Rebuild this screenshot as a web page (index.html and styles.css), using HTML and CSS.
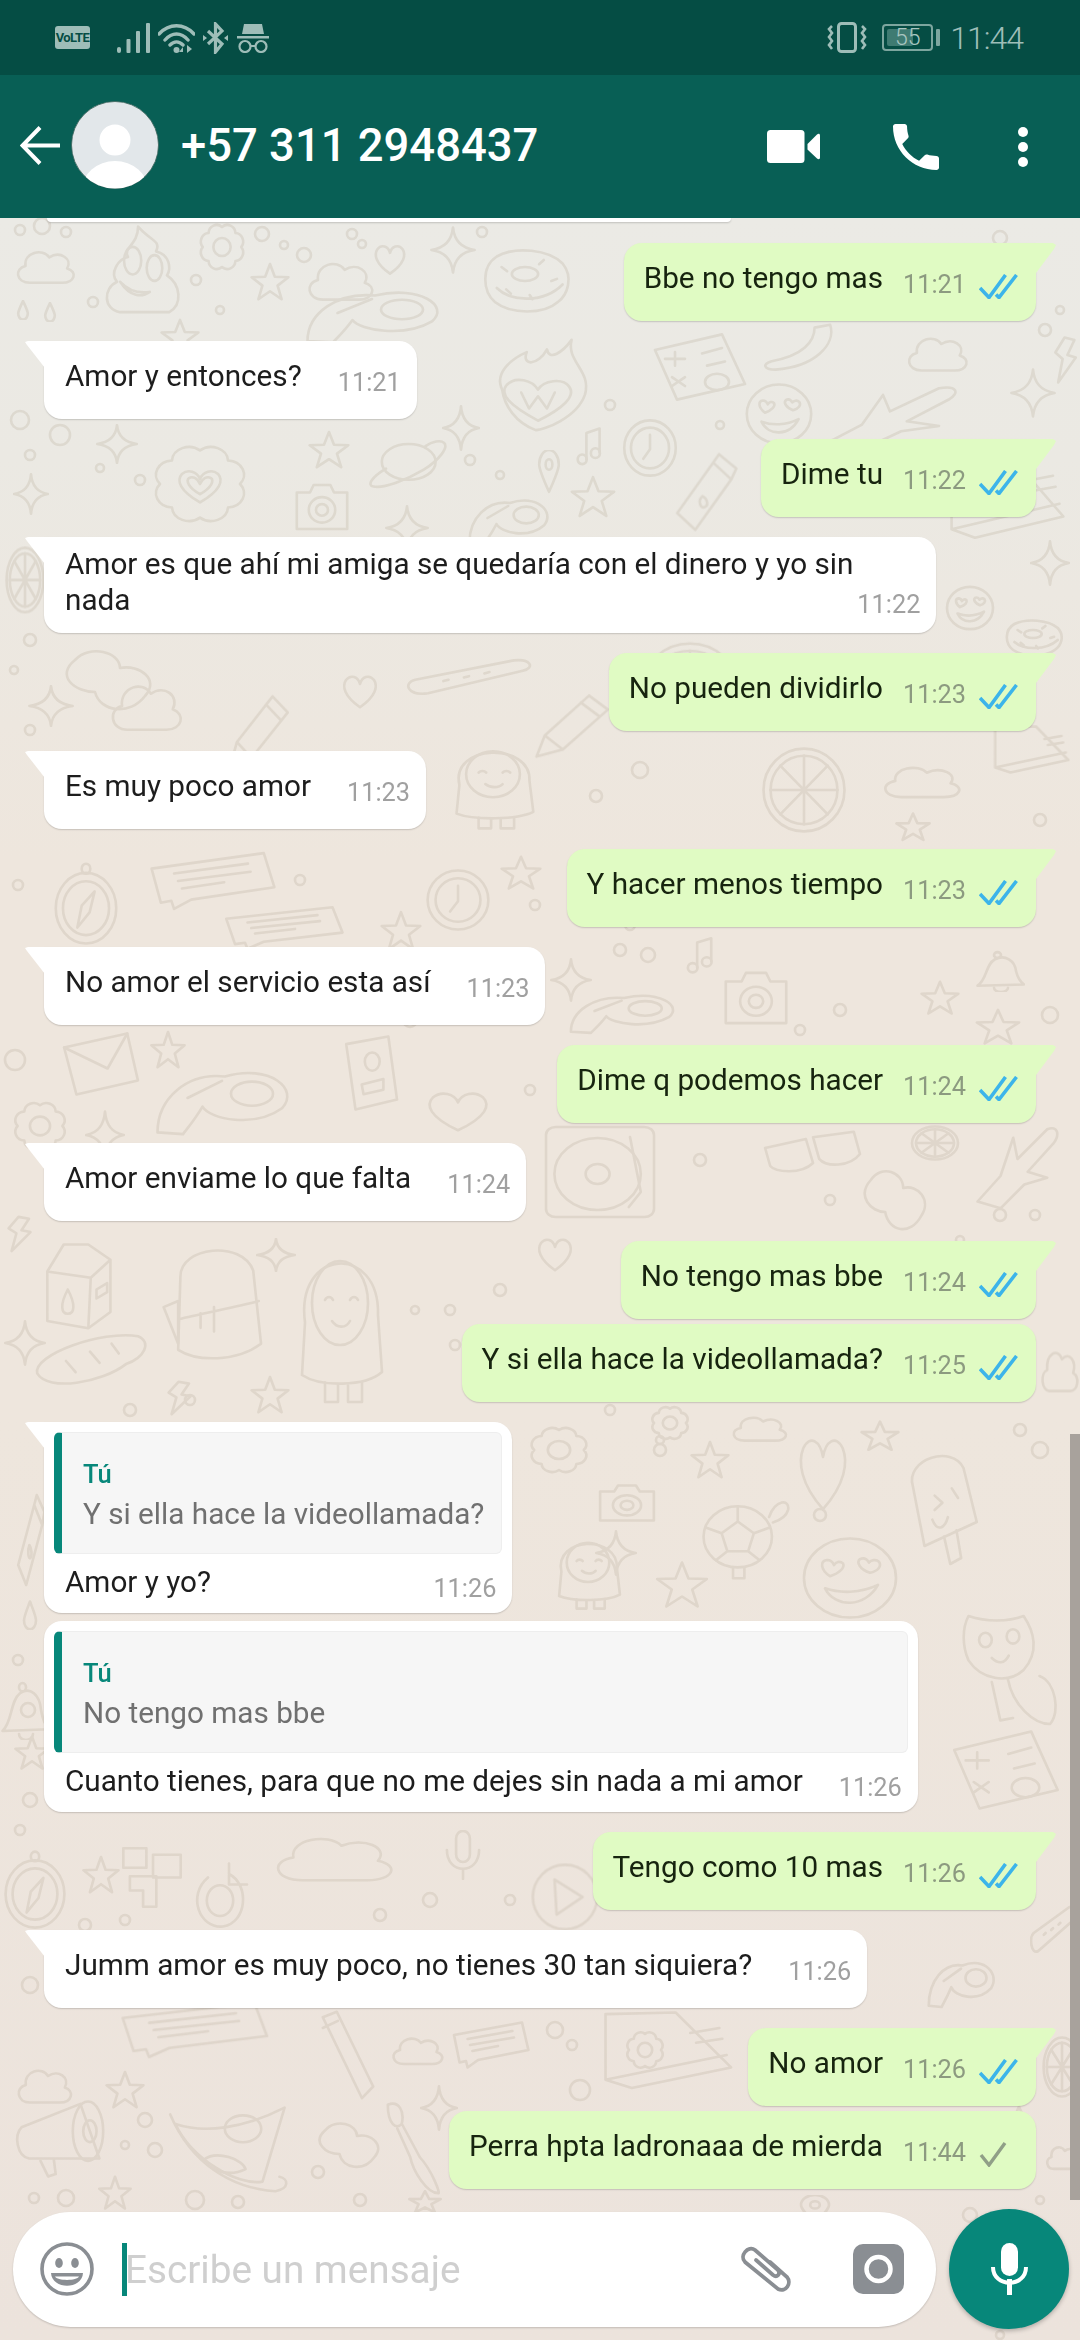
FILE: index.html
```html
<!DOCTYPE html>
<html lang="es">
<head>
<meta charset="utf-8">
<title>WhatsApp</title>
<link rel="stylesheet" href="styles.css">
</head>
<body>
<div class="phone">
  <div class="statusbar">
    <div class="status-left">
      <span class="volte">VoLTE</span>
      <svg class="ic-signal" viewBox="0 0 33 30"><rect x="0" y="24" width="4" height="6" rx="2"/><rect x="9.500" y="16" width="4" height="14" rx="1"/><rect x="19" y="8" width="4" height="22" rx="1"/><rect x="29" y="0" width="4" height="30" rx="1"/></svg>
      <svg class="ic-wifi" viewBox="0 0 37 30"><path d="M1 11C11 0 26 0 36 11M7 17C14 9 23 9 30 17M12 22C16 18 21 18 25 22" fill="none" stroke="#9ebdb8" stroke-width="3.400" stroke-linecap="round"/><circle cx="18.500" cy="27" r="3"/><path d="M25 24l-4 5h4zM29 22l5 4-5 4z"/></svg>
      <svg class="ic-bt" viewBox="0 0 25 32"><path d="M5 9L19 22 12.500 30V2L19 9 5 22" fill="none" stroke="#9ebdb8" stroke-width="3.200"/><path d="M0 13l4 3-4 3zM25 13l-4 3 4 3z"/></svg>
      <svg class="ic-spy" viewBox="0 0 32 30"><path d="M7 1h18l2 10H5zM0 13h32v2.500H0z"/><circle cx="8" cy="23.500" r="5.500" fill="none" stroke="#9ebdb8" stroke-width="2.200"/><circle cx="24" cy="23.500" r="5.500" fill="none" stroke="#9ebdb8" stroke-width="2.200"/><path d="M13 23h6" stroke="#9ebdb8" stroke-width="2"/></svg>
    </div>
    <div class="status-right">
      <svg class="ic-vib" viewBox="0 0 40 31"><rect x="11.500" y="1.500" width="17" height="28" rx="3" fill="none" stroke="#9ebdb8" stroke-width="3"/><path d="M5 4l-3 3 3 4-3 4 3 4-3 4 3 4M35 4l3 3-3 4 3 4-3 4 3 4-3 4" fill="none" stroke="#9ebdb8" stroke-width="2.600"/></svg>
      <div class="battery"><div class="battery-fill"></div><span class="battery-num">55</span></div>
      <div class="battery-nub"></div>
      <span class="clock">11:44</span>
    </div>
  </div>

  <header class="appbar">
    <svg class="ic-back" viewBox="0 0 41 39"><path d="M40 19.500H3M20 1.500L2.500 19.500 20 37.500" fill="none" stroke="#fff" stroke-width="4"/></svg>
    <svg class="avatar" viewBox="0 0 88 88"><defs><clipPath id="av"><circle cx="44" cy="44" r="43.500"/></clipPath></defs><circle cx="44" cy="44" r="43.500" fill="#e2e7ea" stroke="#3c625b" stroke-width=".8"/><g clip-path="url(#av)" fill="#fff"><circle cx="44" cy="39" r="15.500"/><ellipse cx="44" cy="89" rx="33" ry="29"/></g></svg>
    <h1 class="title">+57 311 2948437</h1>
    <svg class="ic-video" viewBox="0 0 53 33"><rect x="0" y="0" width="37.500" height="33" rx="3.500" fill="#fff"/><path d="M40.500 14L50 4.500c1.500-1.300 3-.8 3 1V27.500c0 1.800-1.500 2.300-3 1L40.500 19.500z" fill="#fff"/></svg>
    <svg class="ic-phone" viewBox="3 3 18 18"><path fill="#fff" d="M6.620 10.790c1.440 2.830 3.760 5.140 6.590 6.590l2.200-2.200c.27-.27.67-.36 1.020-.24 1.120.37 2.330.57 3.570.57.55 0 1 .45 1 1V20c0 .55-.45 1-1 1-9.390 0-17-7.610-17-17 0-.55.45-1 1-1h3.500c.55 0 1 .45 1 1 0 1.250.2 2.450.57 3.570.11.35.03.74-.25 1.020l-2.200 2.200z"/></svg>
    <svg class="ic-dots" viewBox="0 0 10 40"><circle cx="5" cy="5" r="5" fill="#fff"/><circle cx="5" cy="20" r="5" fill="#fff"/><circle cx="5" cy="35" r="5" fill="#fff"/></svg>
  </header>

  <main class="chat">
    <svg class="doodles" viewBox="0 218 1080 2122" preserveAspectRatio="none" aria-hidden="true">
      <defs>
        <symbol id="cloud" viewBox="0 0 100 100" preserveAspectRatio="none"><path d="M25 85C3 85 0 55 18 50 15 22 45 12 55 32 72 18 92 35 83 55 100 62 95 85 75 85Z"/></symbol>
        <symbol id="star5" viewBox="0 0 100 100" preserveAspectRatio="none"><path d="M50 5L62 37 96 38 69 59 79 93 50 73 21 93 31 59 4 38 38 37Z"/></symbol>
        <symbol id="star4" viewBox="0 0 100 100" preserveAspectRatio="none"><path d="M50 3Q54 44 97 50 54 56 50 97 46 56 3 50 46 44 50 3Z"/></symbol>
        <symbol id="heart" viewBox="0 0 100 100" preserveAspectRatio="none"><path d="M50 88C10 60 5 35 15 20 27 5 45 12 50 30 55 12 73 5 85 20 95 35 90 60 50 88Z"/></symbol>
        <symbol id="drop" viewBox="0 0 100 100" preserveAspectRatio="none"><path d="M50 5C30 40 20 55 20 68a30 30 0 0 0 60 0C80 55 70 40 50 5Z"/></symbol>
        <symbol id="planet" viewBox="0 0 100 100" preserveAspectRatio="none"><circle cx="52" cy="48" r="32"/><path d="M25 60C8 75 2 90 10 92 22 96 50 80 70 62 88 45 100 22 94 14 90 8 80 12 72 20"/></symbol>
        <symbol id="clock" viewBox="0 0 100 100" preserveAspectRatio="none"><circle cx="50" cy="50" r="46"/><circle cx="50" cy="50" r="34"/><path d="M50 28V52L38 68"/></symbol>
        <symbol id="camera" viewBox="0 0 100 100" preserveAspectRatio="none"><path d="M8 25H30L36 12H64L70 25H92V88H8Z"/><circle cx="50" cy="55" r="22"/><circle cx="50" cy="55" r="10"/></symbol>
        <symbol id="pin" viewBox="0 0 100 100" preserveAspectRatio="none"><path d="M50 95C25 60 15 45 15 33a35 33 0 0 1 70 0C85 45 75 60 50 95Z"/><circle cx="50" cy="33" r="12"/></symbol>
        <symbol id="gear" viewBox="0 0 100 100" preserveAspectRatio="none"><path d="M50 10A17 17 0 0 1 78 22 17 17 0 0 1 90 50 17 17 0 0 1 78 78 17 17 0 0 1 50 90 17 17 0 0 1 22 78 17 17 0 0 1 10 50 17 17 0 0 1 22 22 17 17 0 0 1 50 10Z"/><circle cx="50" cy="50" r="18"/></symbol>
        <symbol id="flower" viewBox="0 0 100 100" preserveAspectRatio="none"><path d="M50 10A17 17 0 0 1 78 22 17 17 0 0 1 90 50 17 17 0 0 1 78 78 17 17 0 0 1 50 90 17 17 0 0 1 22 78 17 17 0 0 1 10 50 17 17 0 0 1 22 22 17 17 0 0 1 50 10Z"/><path d="M50 72C30 58 26 46 32 38 38 32 47 35 50 44 53 35 62 32 68 38 74 46 70 58 50 72Z"/><path d="M50 62C38 54 36 46 39 43 43 40 48 44 50 50 52 44 57 40 61 43 64 46 62 54 50 62Z"/></symbol>
        <symbol id="donut" viewBox="0 0 100 100" preserveAspectRatio="none"><path d="M20 15C40 0 75 5 90 25 102 45 95 70 85 80 70 98 35 98 18 80 5 65 3 30 20 15Z"/><ellipse cx="50" cy="40" rx="14" ry="10"/><path d="M25 30l6 6M70 20l-5 6M78 50l6-3M30 62l5 6M55 70l3 6M20 60c15 20 50 22 70-5"/></symbol>
        <symbol id="note" viewBox="0 0 100 100" preserveAspectRatio="none"><path d="M38 78V18L82 8V62"/><ellipse cx="24" cy="78" rx="15" ry="11"/><ellipse cx="68" cy="64" rx="15" ry="11"/></symbol>
        <symbol id="emoji" viewBox="0 0 100 100" preserveAspectRatio="none"><circle cx="50" cy="50" r="46"/><path d="M30 48C20 40 20 30 27 29 31 29 33 32 34 35 36 31 40 30 43 33 45 38 40 44 30 48ZM70 44C60 40 56 32 60 28 64 26 67 28 69 32 71 29 76 28 79 31 82 36 78 42 70 44Z"/><path d="M25 62C35 85 65 85 78 58 60 68 40 68 25 62Z"/></symbol>
        <symbol id="bottle" viewBox="0 0 100 100" preserveAspectRatio="none"><path d="M10 75L60 15 85 35 35 95ZM68 5L92 22 85 35 60 15Z"/><path d="M45 55C38 60 42 70 48 68 54 66 52 58 45 55Z"/></symbol>
        <symbol id="envelope" viewBox="0 0 100 100" preserveAspectRatio="none"><path d="M5 25L82 5 95 72 20 92Z"/><path d="M5 25L58 55 82 5"/></symbol>
        <symbol id="speech" viewBox="0 0 100 100" preserveAspectRatio="none"><path d="M5 30L90 5 98 60 35 80 22 95 20 82 12 85Z"/><path d="M22 38L78 22M25 50L80 35M28 62L60 52"/></symbol>
        <symbol id="compass" viewBox="0 0 100 100" preserveAspectRatio="none"><circle cx="50" cy="55" r="42"/><circle cx="50" cy="55" r="32"/><circle cx="50" cy="8" r="6"/><path d="M62 35L55 60 38 78 44 52Z"/></symbol>
        <symbol id="pencil" viewBox="0 0 100 100" preserveAspectRatio="none"><path d="M8 95L18 65 72 8 95 28 40 85ZM18 65L40 85M62 18L85 38"/></symbol>
        <symbol id="band" viewBox="0 0 100 100" preserveAspectRatio="none"><path d="M8 55L85 12C98 8 102 28 92 35L18 85C2 92-2 62 8 55Z"/><path d="M30 58l4-3M46 50l4-3M62 41l4-3"/></symbol>
        <symbol id="milk" viewBox="0 0 100 100" preserveAspectRatio="none"><path d="M15 35V90L65 98 92 80V22L65 5H35ZM15 35L68 42 92 22M68 42L65 98"/><path d="M40 55C30 72 32 82 40 82 48 82 50 72 40 55Z"/><path d="M75 55L88 48V58L75 65Z"/></symbol>
        <symbol id="backpack" viewBox="0 0 100 100" preserveAspectRatio="none"><path d="M20 30C20 5 75 0 85 25L92 85C70 100 35 100 18 90Z"/><path d="M5 55L18 50V85ZM18 65C40 60 70 55 90 50M50 55V75M38 60V72"/></symbol>
        <symbol id="person" viewBox="0 0 100 100" preserveAspectRatio="none"><path d="M15 45C5 -5 90 -8 88 40L92 78C75 88 30 88 12 80Z"/><circle cx="50" cy="32" r="28"/><path d="M35 30a5 5 0 0 1 8 0M60 30a5 5 0 0 1 8 0M42 44c5 5 14 5 18 0"/><path d="M35 85V98H48V87M58 87V98H72V85"/></symbol>
        <symbol id="bread" viewBox="0 0 100 100" preserveAspectRatio="none"><path d="M6 70C2 40 60 0 90 10 102 20 95 45 80 55 60 85 15 100 6 70Z"/><path d="M30 50l8 18M50 35l8 18M68 22l6 16"/></symbol>
        <symbol id="bolt" viewBox="0 0 100 100" preserveAspectRatio="none"><path d="M45 5L12 35 38 48 22 95 85 45 55 40 80 10Z"/></symbol>
        <symbol id="ice" viewBox="0 0 100 100" preserveAspectRatio="none"><path d="M10 30C0 8 60-5 75 15L92 60 25 80ZM50 72L58 95 72 90 66 67"/><path d="M38 38l10 6-10 6M60 32l8 8M35 58c6 10 16 8 20-2"/></symbol>
        <symbol id="cat" viewBox="0 0 100 100" preserveAspectRatio="none"><path d="M8 5C25 10 45 10 60 5 70 18 75 35 60 50 45 62 20 58 8 42 2 30 2 15 8 5Z"/><path d="M45 57C50 80 70 95 85 95 95 85 90 60 75 55M30 60L38 92 50 90"/><circle cx="24" cy="25" r="6"/><circle cx="50" cy="22" r="6"/><path d="M30 40c6 5 12 5 16-2"/></symbol>
        <symbol id="turtle" viewBox="0 0 100 100" preserveAspectRatio="none"><ellipse cx="45" cy="52" rx="36" ry="34"/><path d="M45 35L62 48 56 68H34L28 48ZM45 18V35M78 42L62 48M68 78L56 68M22 78L34 68M12 42L28 48"/><path d="M78 30C85 10 100 10 98 22 96 30 88 34 82 36M40 86V98H52V86"/></symbol>
        <symbol id="pizza" viewBox="0 0 100 100" preserveAspectRatio="none"><path d="M92 8L75 85C55 90 20 60 8 25 30 35 60 30 92 8Z"/><path d="M4 15C20 65 50 92 85 95 96 92 95 82 88 80"/><circle cx="60" cy="30" r="14"/><path d="M30 62C40 52 60 62 62 72 50 80 35 75 30 62Z"/></symbol>
        <symbol id="mega" viewBox="0 0 100 100" preserveAspectRatio="none"><path d="M10 35L72 5 92 75 18 75C5 72 2 45 10 35Z"/><ellipse cx="80" cy="40" rx="16" ry="38"/><ellipse cx="82" cy="40" rx="7" ry="14"/><path d="M30 78L38 98 46 95 44 76"/></symbol>
        <symbol id="glasses" viewBox="0 0 100 100" preserveAspectRatio="none"><path d="M5 30L45 15 52 55C40 75 15 70 10 60ZM52 12L92 3 98 40C88 62 65 62 58 48Z"/></symbol>
        <symbol id="record" viewBox="0 0 100 100" preserveAspectRatio="none"><rect x="5" y="5" width="90" height="90" rx="8"/><circle cx="48" cy="52" r="36"/><circle cx="48" cy="52" r="10"/><path d="M75 15L84 70 74 85"/></symbol>
        <symbol id="wheel" viewBox="0 0 100 100" preserveAspectRatio="none"><circle cx="50" cy="50" r="46"/><circle cx="50" cy="50" r="38"/><path d="M50 12V88M12 50H88M23 23L77 77M77 23L23 77"/></symbol>
        <symbol id="flame" viewBox="0 0 100 100" preserveAspectRatio="none"><path d="M18 55C10 35 30 20 40 15 35 30 50 30 58 12 60 25 72 15 80 2 75 25 98 35 92 60 85 85 55 98 48 98 30 90 20 72 18 55Z"/><path d="M50 88C25 72 15 60 22 50 30 40 45 45 50 55 55 45 72 42 78 52 84 62 72 75 50 88Z"/><path d="M35 58L42 75 50 62 58 75 65 58"/></symbol>
        <symbol id="calc" viewBox="0 0 100 100" preserveAspectRatio="none"><path d="M8 25L75 2 98 75 30 98Z"/><path d="M28 28V48M18 38H38M55 30L75 22M60 48L78 42M25 65L38 78M38 65L25 78"/><circle cx="70" cy="72" r="12"/></symbol>
        <symbol id="banana" viewBox="0 0 100 100" preserveAspectRatio="none"><path d="M90 5C98 40 70 80 20 85 5 85 2 75 15 70 55 60 70 35 70 10Z"/></symbol>
        <symbol id="plane" viewBox="0 0 100 100" preserveAspectRatio="none"><path d="M3 90L30 60 45 15 50 40 85 5C98 0 100 12 92 22L62 55 85 62 58 70 30 98Z"/></symbol>
        <symbol id="bird" viewBox="0 0 100 100" preserveAspectRatio="none"><path d="M5 90C5 50 25 20 50 25 80 10 100 40 88 62 70 85 40 75 35 60 30 75 25 85 22 92Z"/><circle cx="68" cy="45" r="14"/><path d="M25 50L48 30"/></symbol>
        <symbol id="book" viewBox="0 0 100 100" preserveAspectRatio="none"><path d="M12 5L60 3 98 70 30 95 12 85ZM12 85L95 55"/><path d="M70 28L90 22M74 40L92 35"/></symbol>
        <symbol id="blob" viewBox="0 0 100 100" preserveAspectRatio="none"><path d="M15 25C30 5 60 15 60 35 80 30 100 50 85 70 70 95 40 90 35 65 15 65-5 45 15 25Z"/></symbol>
        <symbol id="tablet" viewBox="0 0 100 100" preserveAspectRatio="none"><path d="M10 12L78 2 92 85 25 98Z"/><circle cx="52" cy="35" r="12"/><path d="M35 65L70 58V72L38 78Z"/></symbol>
        <symbol id="bell" viewBox="0 0 100 100" preserveAspectRatio="none"><path d="M5 85C25 70 20 35 40 22 60 10 80 25 82 50 85 65 90 75 98 82Z"/><circle cx="45" cy="12" r="7"/><path d="M38 90a14 10 0 0 0 28 0"/></symbol>
        <symbol id="poop" viewBox="0 0 100 100" preserveAspectRatio="none"><path d="M45 5C60 20 75 20 68 32 85 35 88 50 82 58 100 68 102 90 85 98H22C0 95 0 72 18 65 8 55 20 40 32 38 25 28 45 25 45 5Z"/><ellipse cx="38" cy="42" rx="11" ry="15"/><ellipse cx="66" cy="50" rx="10" ry="14"/><path d="M22 65C35 82 50 82 60 76 45 78 32 74 22 65Z"/></symbol>
        <symbol id="mic" viewBox="0 0 100 100" preserveAspectRatio="none"><rect x="35" y="2" width="30" height="62" rx="15"/><path d="M15 40C15 90 85 90 85 40M50 78V98"/></symbol>
        <symbol id="tube" viewBox="0 0 100 100" preserveAspectRatio="none"><path d="M5 8L30 2 95 85 75 98Z"/><path d="M5 20L32 12"/></symbol>
        <symbol id="brush" viewBox="0 0 100 100" preserveAspectRatio="none"><path d="M5 5C25 0 35 12 30 25 20 32 5 25 5 5ZM30 25L62 60C85 75 100 100 95 98 75 98 50 75 45 60L22 30"/></symbol>
        <symbol id="play" viewBox="0 0 100 100" preserveAspectRatio="none"><circle cx="50" cy="50" r="46"/><path d="M35 25L75 50 38 75Z"/></symbol>
        <symbol id="refresh" viewBox="0 0 100 100" preserveAspectRatio="none"><path d="M30 25C-5 50 15 98 55 95 95 90 100 35 65 20M65 5V35H95"/><circle cx="50" cy="58" r="22"/></symbol>
        <symbol id="tetris" viewBox="0 0 100 100" preserveAspectRatio="none"><path d="M5 5H40V35H5ZM50 15H92V50H50ZM15 48H55V95H35V70H15Z"/></symbol>
      </defs>
      <g class="doodle-lines">
        <use href="#cloud" x="14" y="242" width="64" height="48"/>
        <use href="#poop" x="103" y="222" width="78" height="92"/>
        <use href="#gear" x="198" y="222" width="48" height="50"/>
        <use href="#star4" x="430" y="226" width="46" height="48"/>
        <use href="#heart" x="372" y="242" width="36" height="36"/>
        <use href="#star5" x="250" y="262" width="40" height="40"/>
        <use href="#cloud" x="305" y="252" width="72" height="56"/>
        <use href="#donut" x="478" y="246" width="94" height="70"/>
        <use href="#bird" x="300" y="278" width="150" height="70"/>
        <use href="#drop" x="15" y="300" width="16" height="20"/>
        <use href="#drop" x="42" y="302" width="16" height="20"/>
        <use href="#star5" x="160" y="318" width="40" height="38"/>
        <use href="#flame" x="482" y="338" width="112" height="94"/>
        <use href="#calc" x="647" y="333" width="100" height="68"/>
        <use href="#banana" x="760" y="322" width="78" height="56"/>
        <use href="#cloud" x="905" y="328" width="66" height="50"/>
        <use href="#bolt" x="1052" y="335" width="28" height="50"/>
        <use href="#star4" x="1010" y="368" width="46" height="50"/>
        <use href="#emoji" x="744" y="382" width="70" height="64"/>
        <use href="#star4" x="442" y="405" width="38" height="46"/>
        <use href="#clock" x="622" y="418" width="56" height="60"/>
        <use href="#note" x="575" y="425" width="30" height="44"/>
        <use href="#plane" x="820" y="385" width="140" height="66"/>
        <use href="#planet" x="365" y="435" width="84" height="56"/>
        <use href="#star5" x="308" y="430" width="42" height="40"/>
        <use href="#star4" x="96" y="424" width="42" height="40"/>
        <use href="#flower" x="150" y="442" width="100" height="84"/>
        <use href="#pin" x="535" y="450" width="28" height="44"/>
        <use href="#star5" x="570" y="475" width="46" height="44"/>
        <use href="#camera" x="292" y="478" width="60" height="58"/>
        <use href="#bottle" x="670" y="450" width="72" height="84"/>
        <use href="#star4" x="13" y="473" width="36" height="42"/>
        <use href="#bird" x="465" y="488" width="90" height="60"/>
        <use href="#star4" x="385" y="505" width="44" height="46"/>
        <use href="#book" x="936" y="457" width="130" height="85"/>
        <use href="#star4" x="1030" y="540" width="40" height="46"/>
        <use href="#emoji" x="945" y="585" width="50" height="46"/>
        <use href="#donut" x="1002" y="618" width="62" height="40"/>
        <use href="#wheel" x="5" y="545" width="40" height="70"/>
        <use href="#cloud" x="108" y="672" width="78" height="68"/>
        <use href="#blob" x="60" y="640" width="100" height="80"/>
        <use href="#star4" x="28" y="685" width="46" height="42"/>
        <use href="#heart" x="340" y="672" width="40" height="40"/>
        <use href="#band" x="405" y="655" width="128" height="45"/>
        <use href="#pencil" x="225" y="690" width="66" height="80"/>
        <use href="#pencil" x="530" y="690" width="82" height="70"/>
        <use href="#wheel" x="760" y="745" width="88" height="90"/>
        <use href="#wheel" x="640" y="640" width="100" height="90"/>
        <use href="#person" x="445" y="748" width="96" height="82"/>
        <use href="#cloud" x="880" y="758" width="85" height="46"/>
        <use href="#book" x="985" y="725" width="85" height="50"/>
        <use href="#star5" x="895" y="812" width="36" height="30"/>
        <use href="#compass" x="50" y="862" width="72" height="84"/>
        <use href="#speech" x="145" y="850" width="132" height="62"/>
        <use href="#speech" x="220" y="905" width="125" height="46"/>
        <use href="#clock" x="425" y="868" width="66" height="64"/>
        <use href="#star5" x="500" y="855" width="42" height="36"/>
        <use href="#star5" x="380" y="910" width="42" height="42"/>
        <use href="#note" x="685" y="935" width="32" height="42"/>
        <use href="#camera" x="720" y="965" width="72" height="66"/>
        <use href="#bell" x="975" y="950" width="50" height="42"/>
        <use href="#star4" x="550" y="958" width="42" height="44"/>
        <use href="#bird" x="565" y="985" width="118" height="52"/>
        <use href="#star5" x="920" y="980" width="40" height="36"/>
        <use href="#star5" x="975" y="1008" width="46" height="38"/>
        <use href="#envelope" x="60" y="1030" width="82" height="70"/>
        <use href="#star5" x="150" y="1030" width="36" height="40"/>
        <use href="#bird" x="150" y="1055" width="150" height="86"/>
        <use href="#tablet" x="340" y="1035" width="62" height="76"/>
        <use href="#heart" x="422" y="1088" width="72" height="48"/>
        <use href="#gear" x="12" y="1100" width="56" height="52"/>
        <use href="#star4" x="85" y="1110" width="40" height="50"/>
        <use href="#record" x="540" y="1122" width="120" height="100"/>
        <use href="#glasses" x="760" y="1130" width="102" height="60"/>
        <use href="#wheel" x="910" y="1125" width="50" height="36"/>
        <use href="#plane" x="975" y="1125" width="85" height="85"/>
        <use href="#blob" x="860" y="1160" width="72" height="80"/>
        <use href="#bolt" x="5" y="1215" width="30" height="38"/>
        <use href="#milk" x="35" y="1240" width="82" height="90"/>
        <use href="#backpack" x="158" y="1240" width="112" height="122"/>
        <use href="#star4" x="256" y="1238" width="40" height="34"/>
        <use href="#person" x="290" y="1255" width="100" height="150"/>
        <use href="#heart" x="535" y="1235" width="40" height="40"/>
        <use href="#bread" x="30" y="1330" width="120" height="62"/>
        <use href="#star4" x="4" y="1320" width="42" height="46"/>
        <use href="#bolt" x="165" y="1380" width="30" height="36"/>
        <use href="#star5" x="250" y="1375" width="40" height="40"/>
        <use href="#gear" x="528" y="1425" width="62" height="50"/>
        <use href="#gear" x="650" y="1405" width="40" height="36"/>
        <use href="#cloud" x="730" y="1410" width="60" height="36"/>
        <use href="#star5" x="860" y="1420" width="40" height="32"/>
        <use href="#cloud" x="1040" y="1340" width="40" height="60"/>
        <use href="#heart" x="795" y="1430" width="56" height="90"/>
        <use href="#star5" x="690" y="1440" width="40" height="40"/>
        <use href="#ice" x="905" y="1450" width="78" height="120"/>
        <use href="#camera" x="595" y="1480" width="64" height="46"/>
        <use href="#turtle" x="695" y="1490" width="95" height="90"/>
        <use href="#star4" x="595" y="1530" width="42" height="46"/>
        <use href="#person" x="550" y="1540" width="76" height="70"/>
        <use href="#star5" x="655" y="1560" width="54" height="50"/>
        <use href="#emoji" x="800" y="1535" width="100" height="86"/>
        <use href="#bottle" x="15" y="1490" width="32" height="100"/>
        <use href="#drop" x="20" y="1600" width="20" height="30"/>
        <use href="#cat" x="960" y="1610" width="106" height="120"/>
        <use href="#calc" x="945" y="1730" width="115" height="80"/>
        <use href="#bell" x="0" y="1680" width="50" height="60"/>
        <use href="#star5" x="14" y="1735" width="36" height="36"/>
        <use href="#compass" x="0" y="1850" width="70" height="80"/>
        <use href="#star5" x="82" y="1855" width="38" height="40"/>
        <use href="#tetris" x="120" y="1845" width="66" height="65"/>
        <use href="#refresh" x="190" y="1860" width="60" height="70"/>
        <use href="#cloud" x="270" y="1825" width="130" height="65"/>
        <use href="#mic" x="440" y="1830" width="46" height="50"/>
        <use href="#play" x="530" y="1862" width="70" height="70"/>
        <use href="#star5" x="780" y="1940" width="40" height="30"/>
        <use href="#bird" x="925" y="1950" width="75" height="62"/>
        <use href="#band" x="1030" y="1900" width="46" height="60"/>
        <use href="#speech" x="115" y="2000" width="155" height="60"/>
        <use href="#cloud" x="15" y="2060" width="60" height="50"/>
        <use href="#star5" x="105" y="2070" width="40" height="40"/>
        <use href="#tube" x="320" y="2010" width="56" height="90"/>
        <use href="#cloud" x="390" y="2030" width="56" height="40"/>
        <use href="#speech" x="450" y="2020" width="80" height="50"/>
        <use href="#book" x="588" y="2010" width="146" height="82"/>
        <use href="#gear" x="625" y="2030" width="40" height="40"/>
        <use href="#wheel" x="1042" y="2035" width="40" height="64"/>
        <use href="#star4" x="420" y="2085" width="38" height="46"/>
        <use href="#mega" x="12" y="2100" width="95" height="78"/>
        <use href="#pizza" x="165" y="2100" width="130" height="96"/>
        <use href="#blob" x="315" y="2115" width="70" height="60"/>
        <use href="#brush" x="385" y="2100" width="56" height="95"/>
        <use href="#star5" x="98" y="2175" width="34" height="36"/>
        <use href="#star5" x="408" y="2190" width="34" height="24"/>
        <use href="#drop" x="1008" y="2105" width="22" height="30"/>
        <use href="#cloud" x="1045" y="2140" width="36" height="34"/>
        <use href="#pin" x="795" y="2195" width="40" height="30"/>
        <circle cx="20" cy="230" r="5"/><circle cx="42" cy="226" r="8"/><circle cx="66" cy="232" r="5"/><circle cx="93" cy="302" r="5"/><circle cx="196" cy="280" r="5"/><circle cx="220" cy="310" r="4"/><circle cx="262" cy="234" r="7"/><circle cx="284" cy="245" r="4"/><circle cx="304" cy="255" r="7"/><circle cx="352" cy="234" r="5"/><circle cx="362" cy="244" r="4"/><circle cx="482" cy="232" r="5"/><circle cx="1000" cy="238" r="7"/><circle cx="1045" cy="330" r="6"/><circle cx="985" cy="300" r="5"/><circle cx="1060" cy="310" r="4"/><circle cx="20" cy="420" r="9"/><circle cx="60" cy="435" r="10"/><circle cx="30" cy="455" r="5"/><circle cx="140" cy="480" r="5"/><circle cx="100" cy="468" r="4"/><circle cx="470" cy="460" r="5"/><circle cx="500" cy="475" r="4"/><circle cx="610" cy="405" r="5"/><circle cx="720" cy="425" r="4"/><circle cx="810" cy="460" r="6"/><circle cx="990" cy="470" r="5"/><circle cx="30" cy="640" r="6"/><circle cx="14" cy="670" r="4"/><circle cx="30" cy="730" r="5"/><circle cx="640" cy="770" r="8"/><circle cx="596" cy="796" r="6"/><circle cx="395" cy="800" r="6"/><circle cx="420" cy="810" r="4"/><circle cx="1040" cy="820" r="6"/><circle cx="18" cy="885" r="5"/><circle cx="42" cy="960" r="4"/><circle cx="300" cy="880" r="5"/><circle cx="535" cy="905" r="5"/><circle cx="620" cy="950" r="6"/><circle cx="630" cy="925" r="5"/><circle cx="648" cy="955" r="7"/><circle cx="800" cy="1030" r="5"/><circle cx="840" cy="1010" r="6"/><circle cx="1050" cy="1015" r="8"/><circle cx="15" cy="1060" r="10"/><circle cx="410" cy="1020" r="7"/><circle cx="530" cy="1090" r="5"/><circle cx="700" cy="1160" r="6"/><circle cx="830" cy="1200" r="5"/><circle cx="1000" cy="1215" r="6"/><circle cx="1035" cy="1215" r="5"/><circle cx="960" cy="1240" r="4"/><circle cx="500" cy="1290" r="6"/><circle cx="450" cy="1310" r="5"/><circle cx="455" cy="1345" r="5"/><circle cx="415" cy="1310" r="4"/><circle cx="610" cy="1410" r="5"/><circle cx="130" cy="1410" r="6"/><circle cx="190" cy="1400" r="5"/><circle cx="660" cy="1450" r="6"/><circle cx="820" cy="1515" r="6"/><circle cx="660" cy="1440" r="4"/><circle cx="1020" cy="1430" r="6"/><circle cx="1040" cy="1450" r="8"/><circle cx="18" cy="1660" r="5"/><circle cx="28" cy="1710" r="7"/><circle cx="30" cy="1800" r="7"/><circle cx="20" cy="1830" r="5"/><circle cx="430" cy="1900" r="7"/><circle cx="510" cy="1900" r="5"/><circle cx="380" cy="1915" r="6"/><circle cx="230" cy="1950" r="4"/><circle cx="125" cy="1920" r="5"/><circle cx="85" cy="1925" r="6"/><circle cx="1000" cy="1840" r="5"/><circle cx="30" cy="1985" r="8"/><circle cx="60" cy="1960" r="5"/><circle cx="130" cy="1975" r="9"/><circle cx="555" cy="2030" r="8"/><circle cx="572" cy="2045" r="5"/><circle cx="580" cy="2090" r="10"/><circle cx="145" cy="2120" r="7"/><circle cx="125" cy="2145" r="4"/><circle cx="155" cy="2150" r="7"/><circle cx="318" cy="2172" r="6"/><circle cx="66" cy="2198" r="8"/><circle cx="34" cy="2198" r="5"/><circle cx="195" cy="2200" r="9"/><circle cx="238" cy="2202" r="6"/><circle cx="360" cy="2200" r="6"/><circle cx="1040" cy="2200" r="4"/><circle cx="1000" cy="2335" r="4"/><circle cx="970" cy="2215" r="7"/>
      </g>
    </svg>
    <div class="messages">
      <div class="peek"></div>
      <div class="msg out tail first"><span class="text">Bbe no tengo mas</span><span class="meta"><span class="time">11:21</span><svg class="tick"><use href="#dbl"/></svg></span></div>
      <div class="msg in tail"><span class="text">Amor y entonces?</span><span class="meta"><span class="time">11:21</span></span></div>
      <div class="msg out tail"><span class="text">Dime tu</span><span class="meta"><span class="time">11:22</span><svg class="tick"><use href="#dbl"/></svg></span></div>
      <div class="msg in tail multi"><span class="text">Amor es que ahí mi amiga se quedaría con el dinero y yo sin<br>nada</span><span class="meta"><span class="time">11:22</span></span></div>
      <div class="msg out tail"><span class="text">No pueden dividirlo</span><span class="meta"><span class="time">11:23</span><svg class="tick"><use href="#dbl"/></svg></span></div>
      <div class="msg in tail"><span class="text">Es muy poco amor</span><span class="meta"><span class="time">11:23</span></span></div>
      <div class="msg out tail"><span class="text">Y hacer menos tiempo</span><span class="meta"><span class="time">11:23</span><svg class="tick"><use href="#dbl"/></svg></span></div>
      <div class="msg in tail"><span class="text">No amor el servicio esta así</span><span class="meta"><span class="time">11:23</span></span></div>
      <div class="msg out tail"><span class="text">Dime q podemos hacer</span><span class="meta"><span class="time">11:24</span><svg class="tick"><use href="#dbl"/></svg></span></div>
      <div class="msg in tail"><span class="text">Amor enviame lo que falta</span><span class="meta"><span class="time">11:24</span></span></div>
      <div class="msg out tail"><span class="text">No tengo mas bbe</span><span class="meta"><span class="time">11:24</span><svg class="tick"><use href="#dbl"/></svg></span></div>
      <div class="msg out same"><span class="text">Y si ella hace la videollamada?</span><span class="meta"><span class="time">11:25</span><svg class="tick"><use href="#dbl"/></svg></span></div>
      <div class="msg in tail reply-msg">
        <div class="quote"><span class="quote-who">Tú</span><span class="quote-text">Y si ella hace la videollamada?</span></div>
        <div class="reply-row"><span class="text">Amor y yo?</span><span class="meta"><span class="time">11:26</span></span></div>
      </div>
      <div class="msg in same reply-msg wide">
        <div class="quote"><span class="quote-who">Tú</span><span class="quote-text">No tengo mas bbe</span></div>
        <div class="reply-row"><span class="text">Cuanto tienes, para que no me dejes sin nada a mi amor</span><span class="meta"><span class="time">11:26</span></span></div>
      </div>
      <div class="msg out tail"><span class="text">Tengo como 10 mas</span><span class="meta"><span class="time">11:26</span><svg class="tick"><use href="#dbl"/></svg></span></div>
      <div class="msg in tail"><span class="text">Jumm amor es muy poco, no tienes 30 tan siquiera?</span><span class="meta"><span class="time">11:26</span></span></div>
      <div class="msg out tail"><span class="text">No amor</span><span class="meta"><span class="time">11:26</span><svg class="tick"><use href="#dbl"/></svg></span></div>
      <div class="msg out same"><span class="text">Perra hpta ladronaaa de mierda</span><span class="meta"><span class="time">11:44</span><svg class="tick"><use href="#sgl"/></svg></span></div>
    </div>

    <svg class="sprite" aria-hidden="true">
      <symbol id="dbl" viewBox="0 0 39 25"><path d="M1 14L10 23.500 26.500 1M17 20.500L20 23.500 37.500 1" fill="none" stroke="#3cb4ea" stroke-width="3.600"/></symbol>
      <symbol id="sgl" viewBox="0 0 39 25"><path d="M2 13L10 23 26 1" fill="none" stroke="#909f87" stroke-width="3.400"/></symbol>
    </svg>

    <div class="composer">
      <div class="pill">
        <svg class="ic-emoji" viewBox="0 0 54 54"><circle cx="27" cy="27" r="25" fill="none" stroke="#8a8e93" stroke-width="3.600"/><ellipse cx="19" cy="21" rx="3.800" ry="5" fill="#8a8e93"/><ellipse cx="35" cy="21" rx="3.800" ry="5" fill="#8a8e93"/><path d="M11 31H43C42 48 12 48 11 31Z" fill="#8a8e93"/><path d="M15 34.500H39C37 39 17 39 15 34.500Z" fill="#fff"/></svg>
        <span class="cursor"></span>
        <span class="placeholder">Escribe un mensaje</span>
        <svg class="ic-clip" viewBox="0 0 52 47"><path d="M16 14L33 29C37 32 41 28 38 24L15 4C8-1-1 10 5 16L38 43C46 47 52 37 47 31L30 16" fill="none" stroke="#8a8e93" stroke-width="3.800" stroke-linecap="round"/></svg>
        <svg class="ic-cam" viewBox="0 0 51 50"><rect width="51" height="50" rx="10" fill="#8a8e93"/><circle cx="25.500" cy="25" r="12" fill="none" stroke="#fff" stroke-width="4.500"/></svg>
      </div>
      <div class="micbtn"><svg class="ic-mic" viewBox="0 0 37 52"><rect x="10" y="0" width="17" height="33" rx="8.500" fill="#fff"/><path d="M2 24C2 45 35 45 35 24" fill="none" stroke="#fff" stroke-width="4"/><rect x="16" y="36" width="5" height="16" fill="#fff"/></svg></div>
    </div>
    <div class="scrollbar"></div>
  </main>
</div>
</body>
</html>
```

FILE: styles.css
```css
* { box-sizing: border-box; }
html, body { margin: 0; padding: 0; }
body { font-family: Roboto, "Noto Sans", sans-serif; }
.phone { width: 1080px; height: 2340px; display: flex; flex-direction: column; overflow: hidden; position: relative; }

.statusbar { height: 75px; background: #054d44; display: flex; align-items: center; justify-content: space-between; padding: 0 57px 0 55px; fill: #9ebdb8; }
.status-left, .status-right { display: flex; align-items: center; }
.volte { width: 35px; height: 23px; border-radius: 3px; background: #9ebdb8; color: #054d44; font-size: 13px; font-weight: 700; letter-spacing: -.6px; line-height: 23px; text-align: center; }
.ic-signal { width: 33px; height: 30px; margin-left: 27px; }
.ic-wifi { width: 37px; height: 30px; margin-left: 8px; }
.ic-bt { width: 25px; height: 32px; margin-left: 8px; }
.ic-spy { width: 32px; height: 30px; margin-left: 9px; }
.ic-vib { width: 40px; height: 31px; }
.battery { width: 51px; height: 27px; margin-left: 15px; border: 2px solid #7da69f; border-radius: 4px; position: relative; display: flex; align-items: center; justify-content: center; }
.battery-fill { position: absolute; left: 3px; top: 3px; bottom: 3px; width: 26px; background: #3f7b72; border-radius: 2px; }
.battery-num { position: relative; color: #a9c6c1; font-size: 23px; line-height: 23px; font-weight: 300; }
.battery-nub { width: 4px; height: 17px; margin-left: 3px; background: #7da69f; border-radius: 1px; }
.clock { color: #9ebdb8; font-size: 32px; font-weight: 300; letter-spacing: -1px; margin-left: 10px; line-height: 36px; }

.appbar { height: 143px; background: #085f55; display: flex; align-items: center; padding-left: 20px; }
.ic-back { width: 41px; height: 39px; margin-bottom: 2px; }
.avatar { width: 88px; height: 88px; margin-left: 10px; margin-bottom: 3px; }
.title { margin: 0 0 2px 22px; color: #fff; font-size: 45.400px; font-weight: 500; line-height: 54px; flex: 1; white-space: nowrap; }
.ic-video { width: 53px; height: 33px; margin-right: 73px; }
.ic-phone { width: 46px; height: 46px; margin-right: 79px; }
.ic-dots { width: 10px; height: 40px; margin-right: 52px; }

.chat { flex: 1; min-height: 0; position: relative; display: flex; flex-direction: column; background: linear-gradient(#ebeae5 0, #ebe9e3 240px, #eee6dd 640px, #eee6dd 1200px, #ece3dc 2122px); overflow: hidden; }
.doodles { position: absolute; left: 0; top: 0; width: 1080px; height: 2122px; }
.doodle-lines { fill: none; stroke: #b8ac9a; stroke-width: 2.600; opacity: .27; stroke-linejoin: round; stroke-linecap: round; }
.doodles symbol * { vector-effect: non-scaling-stroke; }
.sprite { position: absolute; width: 0; height: 0; }

.messages { position: relative; display: flex; flex-direction: column; }
.peek { width: 684px; height: 4px; margin-left: 47px; background: #fff; border-radius: 0 0 14px 14px; box-shadow: 0 1px 2px rgba(0,0,0,.18); }

.msg { position: relative; display: flex; align-items: flex-start; min-height: 78px; margin-top: 20px; padding: 17px 18px 0 20px; border-radius: 18px; box-shadow: 0 1px 1.500px rgba(0,0,0,.17); color: #1d1d1d; font-size: 29.700px; line-height: 36px; align-self: flex-start; }
.msg.first { margin-top: 21px; }
.msg.in { background: #fff; margin-left: 44px; padding-left: 21px; padding-right: 16px; }
.msg.out { background: #e0fbc3; align-self: flex-end; margin-right: 44px; color: #17240f; }
.msg.same { margin-top: 5px; }
.msg.same.reply-msg { margin-top: 8px; }
.msg.tail.in { border-top-left-radius: 0; }
.msg.tail.out { border-top-right-radius: 0; }
.msg.tail::after { content: ""; position: absolute; top: 0; width: 20px; height: 32px; }
.msg.in.tail::after { left: -19px; background: #fff; clip-path: polygon(3px 0, 20px 0, 20px 27px, 2px 4px, 0 1px); }
.msg.out.tail::after { right: -20px; background: #e0fbc3; clip-path: polygon(0 0, 17px 0, 20px 2px, 18px 6px, 0 30px); }

.text { white-space: nowrap; }
.meta { display: flex; align-items: flex-start; margin-top: 7px; margin-left: 36px; line-height: 36px; }
.msg.out .meta { margin-left: 20px; }
.time { color: #a0a0a0; font-size: 25.300px; white-space: nowrap; }
.msg.out .time { color: #8c9a80; }
.tick { width: 39px; height: 25px; margin: 7px 0 0 13px; }

.msg.multi { padding-top: 9px; padding-bottom: 15px; align-items: flex-end; }
.msg.multi .meta { margin-left: 4px; margin-bottom: -5px; }

.reply-msg { display: block; padding: 10px 10px 0; }
.msg.in.reply-msg { padding: 10px 10px 0; }
.quote { height: 122px; display: flex; flex-direction: column; padding: 23px 17px 0 21px; background: #f6f6f6; border: 1px solid #eeeeee; border-left: 8px solid #07877a; border-radius: 6px; }
.quote-who { color: #07877a; font-size: 25.500px; font-weight: 500; line-height: 36px; }
.quote-text { color: #707070; font-size: 29.700px; line-height: 36px; margin-top: 4px; white-space: nowrap; }
.reply-row { display: flex; justify-content: space-between; padding: 10px 6px 6px 11px; }

.composer { margin-top: auto; display: flex; align-items: center; gap: 13px; padding: 0 11px 11px 13px; position: relative; }
.pill { flex: 1; height: 115px; background: #fff; border-radius: 58px; display: flex; align-items: center; padding: 0 32px 0 27px; box-shadow: 0 1px 2px rgba(0,0,0,.18); }
.ic-emoji { width: 54px; height: 54px; }
.cursor { width: 5px; height: 53px; margin-left: 28px; background: #07877a; }
.placeholder { margin-left: -2px; color: #cfcfcf; font-size: 38.700px; white-space: nowrap; }
.ic-clip { width: 52px; height: 47px; margin-left: auto; }
.ic-cam { width: 51px; height: 50px; margin-left: 61px; }
.micbtn { width: 120px; height: 120px; border-radius: 50%; background: #07877a; display: flex; align-items: center; justify-content: center; box-shadow: 0 2px 4px rgba(0,0,0,.25); }
.ic-mic { width: 37px; height: 52px; }
.scrollbar { position: absolute; right: 0; top: 1216px; width: 10px; height: 766px; background: #a8a29c; }
```
